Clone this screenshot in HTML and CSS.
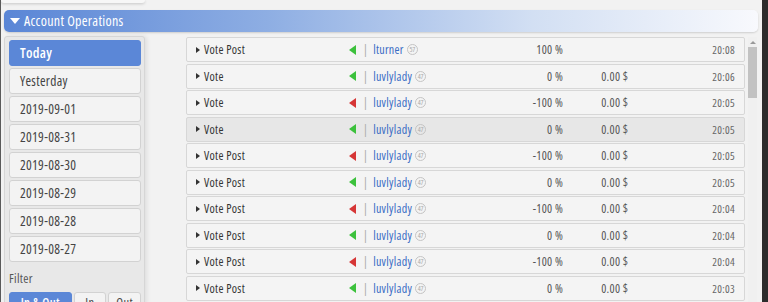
FILE: index.html
```html
<!DOCTYPE html>
<html>
<head>
<meta charset="utf-8">
<link rel="stylesheet" href="styles.css">
</head>
<body>
<div class="app">
  <div class="top-nub"></div>
  <div class="header"><span class="hdr-caret"></span>Account Operations</div>
  <div class="main">
    <aside class="sidebar">
      <div class="day active">Today</div>
      <div class="day">Yesterday</div>
      <div class="day">2019-09-01</div>
      <div class="day">2019-08-31</div>
      <div class="day">2019-08-30</div>
      <div class="day">2019-08-29</div>
      <div class="day">2019-08-28</div>
      <div class="day">2019-08-27</div>
      <div class="filter-label">Filter</div>
      <div class="filters">
        <div class="fbtn active wide">In &amp; Out</div>
        <div class="fbtn">In</div>
        <div class="fbtn">Out</div>
      </div>
    </aside>
    <div class="list">
      <div class="row"><span class="caret"></span><span class="type">Vote Post</span><span class="arrow up"></span><span class="sep">|</span><span class="user"><span class="uname">lturner</span><span class="badge">57</span></span><span class="pct">100 %</span><span class="amt"></span><span class="time">20:08</span></div>
      <div class="row"><span class="caret"></span><span class="type">Vote</span><span class="arrow up"></span><span class="sep">|</span><span class="user"><span class="uname">luvlylady</span><span class="badge">47</span></span><span class="pct">0 %</span><span class="amt">0.00 $</span><span class="time">20:06</span></div>
      <div class="row"><span class="caret"></span><span class="type">Vote</span><span class="arrow down"></span><span class="sep">|</span><span class="user"><span class="uname">luvlylady</span><span class="badge">47</span></span><span class="pct">-100 %</span><span class="amt">0.00 $</span><span class="time">20:05</span></div>
      <div class="row hover"><span class="caret"></span><span class="type">Vote</span><span class="arrow up"></span><span class="sep">|</span><span class="user"><span class="uname">luvlylady</span><span class="badge">47</span></span><span class="pct">0 %</span><span class="amt">0.00 $</span><span class="time">20:05</span></div>
      <div class="row"><span class="caret"></span><span class="type">Vote Post</span><span class="arrow down"></span><span class="sep">|</span><span class="user"><span class="uname">luvlylady</span><span class="badge">47</span></span><span class="pct">-100 %</span><span class="amt">0.00 $</span><span class="time">20:05</span></div>
      <div class="row"><span class="caret"></span><span class="type">Vote Post</span><span class="arrow up"></span><span class="sep">|</span><span class="user"><span class="uname">luvlylady</span><span class="badge">47</span></span><span class="pct">0 %</span><span class="amt">0.00 $</span><span class="time">20:05</span></div>
      <div class="row"><span class="caret"></span><span class="type">Vote Post</span><span class="arrow down"></span><span class="sep">|</span><span class="user"><span class="uname">luvlylady</span><span class="badge">47</span></span><span class="pct">-100 %</span><span class="amt">0.00 $</span><span class="time">20:04</span></div>
      <div class="row"><span class="caret"></span><span class="type">Vote Post</span><span class="arrow up"></span><span class="sep">|</span><span class="user"><span class="uname">luvlylady</span><span class="badge">47</span></span><span class="pct">0 %</span><span class="amt">0.00 $</span><span class="time">20:04</span></div>
      <div class="row"><span class="caret"></span><span class="type">Vote Post</span><span class="arrow down"></span><span class="sep">|</span><span class="user"><span class="uname">luvlylady</span><span class="badge">47</span></span><span class="pct">-100 %</span><span class="amt">0.00 $</span><span class="time">20:04</span></div>
      <div class="row"><span class="caret"></span><span class="type">Vote Post</span><span class="arrow up"></span><span class="sep">|</span><span class="user"><span class="uname">luvlylady</span><span class="badge">47</span></span><span class="pct">0 %</span><span class="amt">0.00 $</span><span class="time">20:03</span></div>
    </div>
    <div class="scrollbar">
      <div class="sb-arrow"></div>
      <div class="sb-thumb"></div>
    </div>
  </div>
</div>
</body>
</html>
```
FILE: styles.css
```css
* { box-sizing: border-box; }
html, body { margin: 0; padding: 0; }
body {
  width: 768px;
  height: 302px;
  overflow: hidden;
  background: #2c2c2c;
  font-family: "Open Sans", "Liberation Sans", sans-serif;
  font-stretch: 75%;
  letter-spacing: 0.3px;
}
.app {
  width: 762px;
  height: 302px;
  background: #f2f2f2;
  border-left: 1px solid #5a5a5a;
  overflow: hidden;
}
.top-nub {
  width: 144px;
  height: 3px;
  background: #f7f7f7;
  box-shadow: 0 1px 3px rgba(0,0,0,0.18);
  border-radius: 0 0 4px 4px;
}
.header {
  margin: 7px 4px 0 3px;
  height: 22px;
  border-radius: 5px;
  background: linear-gradient(to right, #5a86d6 0%, #8eaee3 35%, #d2dff3 70%, #f8f9fd 100%);
  box-shadow: 0 1px 2px rgba(0,0,0,0.15);
  color: #fff;
  font-size: 14px;
  line-height: 22px;
  display: flex;
  align-items: center;
  padding-left: 6px;
}
.hdr-caret {
  width: 0; height: 0;
  border-left: 5px solid transparent;
  border-right: 5px solid transparent;
  border-top: 6px solid #fff;
  margin-right: 4px;
}
.main {
  display: flex;
  align-items: flex-start;
  margin-top: 4px;
  margin-left: 3px;
}
.sidebar {
  width: 141px;
  height: 270px;
  background: #e8e8e8;
  border: 1px solid #d6d6d6;
  border-radius: 3px;
  padding: 3px 3px 0 4px;
  box-shadow: 2px 0 4px rgba(0,0,0,0.08);
}
.day {
  width: 132px;
  height: 26px;
  margin-bottom: 2px;
  background: #f3f3f3;
  border: 1px solid #d2d2d2;
  border-radius: 3px;
  color: #444;
  font-size: 13.5px;
  line-height: 24px;
  padding-left: 10px;
}
.day.active {
  background: #5b87d7;
  border-color: #5b87d7;
  color: #fff;
  font-weight: 600;
  font-size: 14px;
}
.filter-label {
  margin-top: 9px;
  font-size: 12.5px;
  color: #555;
  line-height: 16px;
}
.filters {
  display: flex;
  gap: 2px;
  margin-top: 5px;
}
.fbtn {
  width: 33px;
  height: 24px;
  background: #f3f3f3;
  border: 1px solid #d2d2d2;
  border-radius: 3px;
  font-size: 12.5px;
  color: #444;
  text-align: center;
  line-height: 20px;
}
.fbtn.wide { width: 63px; }
.fbtn.active {
  background: #5b87d7;
  border-color: #5b87d7;
  color: #fff;
  font-weight: 600;
}
.list {
  margin-left: 41px;
  margin-top: 1px;
  width: 559px;
}
.row {
  height: 25px;
  margin-bottom: 1.5px;
  background: #f4f4f4;
  border: 1px solid #d7d7d7;
  border-radius: 2px;
  display: flex;
  align-items: center;
  font-size: 12px;
  color: #333;
  white-space: nowrap;
}
.row.hover { background: #e7e7e7; }
.caret {
  width: 0; height: 0;
  margin-left: 9px;
  margin-right: 4px;
  border-top: 3px solid transparent;
  border-bottom: 3px solid transparent;
  border-left: 4px solid #333;
}
.type { width: 145px; }
.arrow {
  width: 0; height: 0;
  border-top: 5px solid transparent;
  border-bottom: 5px solid transparent;
  border-right: 7px solid #3cc13c;
}
.arrow.down { border-right-color: #d63636; }
.sep {
  color: #aaa;
  margin: 0 5px 0 7px;
  font-size: 12px;
}
.user {
  width: 121px;
  display: flex;
  align-items: center;
}
.uname { color: #3a6cc4; }
.badge {
  width: 11px;
  height: 11px;
  margin-left: 3px;
  border: 1px solid #c4c4c4;
  border-radius: 50%;
  font-size: 7px;
  line-height: 9px;
  color: #aaa;
  text-align: center;
  letter-spacing: -0.2px;
}
.pct {
  width: 69px;
  text-align: right;
  color: #555;
}
.amt {
  width: 80px;
  margin-left: 38px;
  color: #555;
}
.time {
  flex: 1;
  text-align: right;
  padding-right: 9px;
  font-size: 11px;
  color: #666;
}
.scrollbar {
  width: 9px;
  height: 265px;
  margin-left: 3px;
  margin-top: 1px;
  background: #f0f0f0;
  display: flex;
  flex-direction: column;
  align-items: center;
}
.sb-arrow {
  margin-top: 4px;
  width: 0; height: 0;
  border-left: 3px solid transparent;
  border-right: 3px solid transparent;
  border-bottom: 3px solid #999;
}
.sb-thumb {
  margin-top: 3px;
  width: 9px;
  height: 51px;
  background: #c2c2c2;
}
```
